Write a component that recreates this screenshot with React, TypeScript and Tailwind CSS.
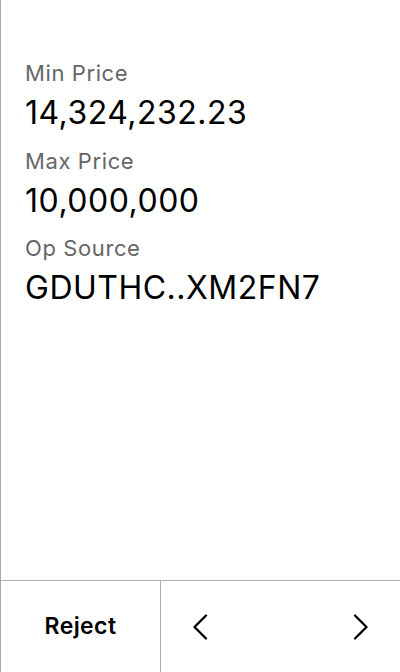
const ROWS = [
  { label: "Min Price", value: "14,324,232.23" },
  { label: "Max Price", value: "10,000,000" },
  { label: "Op Source", value: "GDUTHC..XM2FN7" },
];

function Chevron({ dir }: { dir: "left" | "right" }) {
  return (
    <svg width="16" height="26" viewBox="0 0 16 26" fill="none" stroke="black" strokeWidth="2.3" strokeLinecap="round" strokeLinejoin="round">
      {dir === "left" ? <polyline points="14,1.5 2.5,13 14,24.5" /> : <polyline points="2,1.5 13.5,13 2,24.5" />}
    </svg>
  );
}

export default function App() {
  return (
    <div
      style={{ fontFamily: "Inter, 'Noto Sans', sans-serif" }}
      className="w-[400px] h-[672px] bg-white border-l border-[#a8a8a8] flex flex-col"
    >
      {/* Details */}
      <div className="flex-1 px-6 pt-[58px]">
        {ROWS.map((r) => (
          <div key={r.label} className="mb-[7.5px]">
            <div className="text-[22px] leading-[30px] tracking-[0.6px] text-[#666]">{r.label}</div>
            <div className="text-[32px] leading-[50px] tracking-[0.5px] text-black">{r.value}</div>
          </div>
        ))}
      </div>

      {/* Footer */}
      <div className="h-[92px] border-t border-[#b0b0b0] flex">
        <button className="w-[159px] flex items-center justify-center text-[23px] tracking-[0.4px] font-semibold text-black">
          Reject
        </button>
        <div className="flex-1 border-l border-[#b0b0b0] flex items-center justify-between pl-[31px] pr-[31px]">
          <Chevron dir="left" />
          <Chevron dir="right" />
        </div>
      </div>
    </div>
  );
}
